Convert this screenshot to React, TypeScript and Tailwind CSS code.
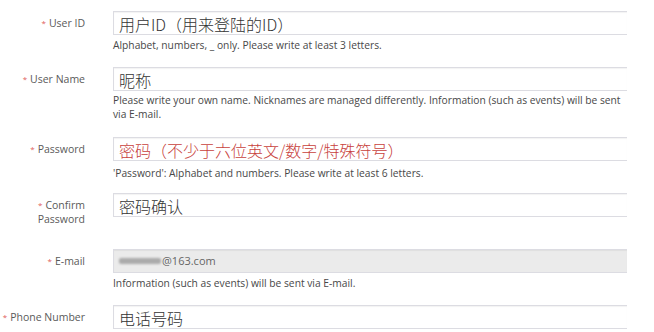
type Field = {
  label: string[];
  value: string;
  tone?: "normal" | "red" | "email";
  help?: string;
  helpGap: string;
  rowGap: string;
};

const fields: Field[] = [
  {
    label: ["User ID"],
    value: "用户ID（用来登陆的ID）",
    help: "Alphabet, numbers, _ only. Please write at least 3 letters.",
    helpGap: "mt-[3px]",
    rowGap: "mb-[15px]",
  },
  {
    label: ["User Name"],
    value: "昵称",
    help: "Please write your own name. Nicknames are managed differently. Information (such as events) will be sent via E-mail.",
    helpGap: "mt-[2px]",
    rowGap: "mb-[16px]",
  },
  {
    label: ["Password"],
    value: "密码（不少于六位英文/数字/特殊符号）",
    tone: "red",
    help: "'Password': Alphabet and numbers. Please write at least 6 letters.",
    helpGap: "mt-[5px]",
    rowGap: "mb-[13px]",
  },
  {
    label: ["Confirm", "Password"],
    value: "密码确认",
    helpGap: "",
    rowGap: "mb-[23px]",
  },
  {
    label: ["E-mail"],
    value: "@163.com",
    tone: "email",
    help: "Information (such as events) will be sent via E-mail.",
    helpGap: "mt-[3px]",
    rowGap: "mb-[15px]",
  },
  {
    label: ["Phone Number"],
    value: "电话号码",
    helpGap: "",
    rowGap: "",
  },
];

function Row({ f }: { f: Field }) {
  const isEmail = f.tone === "email";
  return (
    <div className={`flex ${f.rowGap}`}>
      <div className="w-[113px] shrink-0 whitespace-nowrap pr-[28px] pt-[5px] text-right text-[10.5px] leading-[14px] text-[#5a5a5a]">
        {f.label.map((l, i) => (
          <div key={l}>
            {i === 0 && <span className="mr-[3px] text-[8px] align-[1px] text-[#e0605a]">*</span>}
            {l}
          </div>
        ))}
      </div>
      <div className="w-[514px] shrink-0">
        <div
          className={`flex h-[24px] items-center border border-r-0 border-[#dcdce2] pl-[5px] shadow-[inset_0_1px_1px_rgba(0,0,0,0.05)] ${
            isEmail ? "bg-[#ebebeb]" : "bg-white"
          }`}
        >
          {isEmail ? (
            <span className="flex items-center text-[11px] text-[#666]">
              <span className="mr-[1px] h-[6px] w-[42px] rounded-[2px] bg-[#ababab] blur-[1px]" />
              {f.value}
            </span>
          ) : (
            <span
              className={`pt-[2px] text-[16px] font-light leading-none ${f.tone === "red" ? "text-[#c8413c]" : "text-[#333]"}`}
              style={{ fontFamily: '"Noto Sans CJK KR", "Noto Sans CJK SC", sans-serif' }}
            >
              {f.value}
            </span>
          )}
        </div>
        {f.help && (
          <p className={`${f.helpGap} text-[10.25px] leading-[14px] text-[#484848]`}>{f.help}</p>
        )}
      </div>
    </div>
  );
}

export default function App() {
  return (
    <div
      className="h-[332px] w-[654px] overflow-hidden bg-white pt-[11px]"
      style={{ fontFamily: '"Open Sans", "Noto Sans CJK SC", sans-serif' }}
    >
      {fields.map((f) => (
        <Row key={f.label.join(" ")} f={f} />
      ))}
    </div>
  );
}
